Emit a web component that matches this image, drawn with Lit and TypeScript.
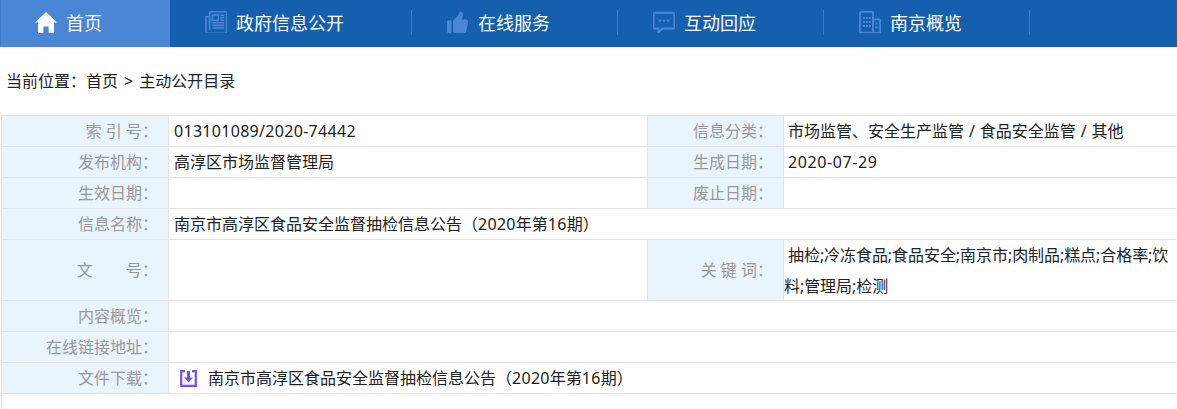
import { LitElement, html, css, svg } from "lit";
import { customElement } from "lit/decorators.js";

const ICON = "#4a86d6";

const icons = {
  home: svg`<path d="M11 2 L22 12.6 L19 12.6 L19 23 L13.6 23 L13.6 16.5 L8.4 16.5 L8.4 23 L3 23 L3 12.6 L0 12.6 Z" fill="#fff"/>`,
  news: svg`<g transform="translate(0 .8)" fill="none" stroke="${ICON}" stroke-width="1.6">
    <path d="M4.6 1 H21 a.6.6 0 0 1 .6.6 V21 a1.4 1.4 0 0 1 -1.4 1.4 H3 A2 2 0 0 1 1 20.4 V6 H4.6"/>
    <path d="M4.6 1 V19.5"/>
    <rect x="7.4" y="4.2" width="6" height="5.4"/>
    <path d="M15.4 4.6 H19 M15.4 7 H19 M15.4 9.4 H19 M7.4 12 H19 M7.4 14.6 H19 M7.4 17.2 H19"/>
  </g>`,
  thumb: svg`<g transform="translate(0 1)" fill="${ICON}">
    <path d="M0 10.6 Q0 9.4 1.4 9.4 H4.4 V22 H1.6 Q0 22 0 20.6 Z"/>
    <path d="M6 9.6 L10.6 5.6 Q12.4 3.6 12.6 0.6 Q15.8 0.4 15.8 3.6 Q15.8 6.4 14.4 8.6 H19.2 Q21.4 8.8 21 11 L19.4 20 Q19 22.4 16.6 22.4 H9 Q6 22.4 6 20.4 Z"/>
  </g>`,
  chat: svg`<g transform="translate(0 1.8)">
    <path d="M2 1 H20 a1.4 1.4 0 0 1 1.4 1.4 V15.2 a1.4 1.4 0 0 1 -1.4 1.4 H9.4 L5.6 20.4 V16.6 H2 a1.4 1.4 0 0 1 -1.4 -1.4 V2.4 A1.4 1.4 0 0 1 2 1 Z" fill="none" stroke="${ICON}" stroke-width="2"/>
    <circle cx="7" cy="8.8" r="1.3" fill="${ICON}"/><circle cx="11" cy="8.8" r="1.3" fill="${ICON}"/><circle cx="15" cy="8.8" r="1.3" fill="${ICON}"/>
  </g>`,
  building: svg`<g transform="translate(0 1)"><g fill="none" stroke="${ICON}" stroke-width="1.9">
    <path d="M14 21.6 H2 A1.2 1.2 0 0 1 .9 20.4 V2 A1.2 1.2 0 0 1 2 .9 H13 A1.2 1.2 0 0 1 14 2 Z"/>
    <path d="M14 8.4 H20 A1 1 0 0 1 21.1 9.4 V20.4 A1.2 1.2 0 0 1 20 21.6 H14"/>
  </g>
  <g fill="${ICON}">
    <rect x="4" y="6" width="2" height="2"/><rect x="7" y="6" width="2" height="2"/><rect x="10" y="6" width="2" height="2"/>
    <rect x="4" y="10" width="2" height="2"/><rect x="7" y="10" width="2" height="2"/><rect x="10" y="10" width="2" height="2"/>
    <rect x="4" y="14" width="2" height="2"/><rect x="7" y="14" width="2" height="2"/><rect x="10" y="14" width="2" height="2"/>
    <rect x="16.5" y="11.5" width="2" height="2"/><rect x="16.5" y="15.5" width="2" height="2"/>
  </g></g>`,
};

const items: [keyof typeof icons, string][] = [
  ["home", "首页"],
  ["news", "政府信息公开"],
  ["thumb", "在线服务"],
  ["chat", "互动回应"],
  ["building", "南京概览"],
];

@customElement("app-root")
export class AppRoot extends LitElement {
  static styles = css`
    :host {
      display: block;
      height: 409px;
      overflow: hidden;
      background: #fff;
      font-family: "Noto Sans", "Noto Sans CJK SC", sans-serif;
      font-size: 16px;
      color: #222;
    }
    .nav {
      display: flex;
      height: 47px;
      background: #1560ae;
      color: #fff;
      font-size: 18px;
    }
    .item {
      display: flex;
      align-items: center;
      gap: 9px;
      padding: 0 0 4px 35px;
      width: 206px;
      box-sizing: border-box;
    }
    .item:first-child {
      width: 170px;
      background: #4a86d6;
      border-left: 1px solid #3f78c4;
      padding-left: 34px;
    }
    .item:nth-child(2) {
      width: 242px;
    }
    .item svg {
      width: 22px;
      height: 22px;
      flex: none;
    }
    .sep {
      margin: 2px 0 0 auto;
      width: 1px;
      height: 25px;
      background: #3f7cc6;
    }
    .crumb {
      height: 68px;
      padding-left: 6px;
      line-height: 68px;
      white-space: pre;
    }
    .gt {
      margin: 0 6px;
    }
    .wrap {
      margin-left: 1px;
      border-left: 1px solid #e3e3e3;
      height: 294px;
      width: 1190px;
    }
    table {
      border-collapse: collapse;
      table-layout: fixed;
      width: 1190px;
      margin-left: -1px;
    }
    td {
      border: 1px solid #e3e3e3;
      height: 30px;
      padding: 0 0 0 5px;
      box-sizing: border-box;
      line-height: 30px;
      vertical-align: middle;
    }
    tr {
      height: 31px;
    }
    td.l {
      background: #eaf4fc;
      color: #999;
      text-align: right;
      padding: 0 10px 0 0;
      white-space: pre;
    }
    td.r {
      padding-left: 4px;
    }
    tr.tall {
      height: 61px;
    }
    td.kw {
      padding: 0;
      text-indent: 4px;
      line-height: 31px;
      letter-spacing: -0.06px;
    }
    .kwtext {
      width: 393px;
      height: 60px;
    }
    .n {
      letter-spacing: 0.3px;
    }
    .d {
      letter-spacing: 0.6px;
    }
    .cat {
      word-spacing: 0.75px;
    }
    .dl {
      display: flex;
      align-items: center;
      gap: 11px;
      padding-left: 6px;
    }
    .dl svg {
      width: 17px;
      height: 17px;
      flex: none;
    }
  `;

  render() {
    const title = html`南京市高淳区食品安全监督抽检信息公告（<span class="n">2020</span>年第<span class="n">16</span>期）`;
    return html`
      <div class="nav">
        ${items.map(
          ([k, t], i) => html`<div class="item">
            <svg viewBox="0 1 22 22">${icons[k]}</svg><span>${t}</span>
            ${i > 0 ? html`<span class="sep"></span>` : ""}
          </div>`
        )}
      </div>
      <div class="crumb">当前位置：首页<span class="gt">&gt;</span>主动公开目录</div>
      <div class="wrap">
        <table>
          <colgroup>
            <col style="width:167px" /><col style="width:479px" /><col style="width:136px" /><col />
          </colgroup>
          <tr><td class="l">索 引 号：</td><td><span class="n">013101089/2020-74442</span></td><td class="l">信息分类：</td><td class="r"><span class="cat">市场监管、安全生产监管 / 食品安全监管 / 其他</span></td></tr>
          <tr><td class="l">发布机构：</td><td>高淳区市场监督管理局</td><td class="l">生成日期：</td><td class="r"><span class="d">2020-07-29</span></td></tr>
          <tr><td class="l">生效日期：</td><td></td><td class="l">废止日期：</td><td></td></tr>
          <tr><td class="l">信息名称：</td><td colspan="3">${title}</td></tr>
          <tr class="tall"><td class="l">文        号：</td><td></td><td class="l">关 键 词：</td>
            <td class="kw"><div class="kwtext">抽检;冷冻食品;食品安全;南京市;肉制品;糕点;合格率;饮料;管理局;检测</div></td></tr>
          <tr><td class="l">内容概览：</td><td colspan="3"></td></tr>
          <tr><td class="l">在线链接地址：</td><td colspan="3"></td></tr>
          <tr><td class="l">文件下载：</td><td colspan="3"><div class="dl">
            <svg viewBox="0 0 17 17"><path d="M5 1.2 H1.2 V15.8 H15.8 V1.2 H12" fill="none" stroke="#7a4ff0" stroke-width="2.2"/><path d="M7 1 H10 V7.5 H13 L8.5 12.5 L4 7.5 H7 Z" fill="#7a4ff0"/></svg>
            <span>${title}</span></div></td></tr>
        </table>
      </div>
    `;
  }
}
